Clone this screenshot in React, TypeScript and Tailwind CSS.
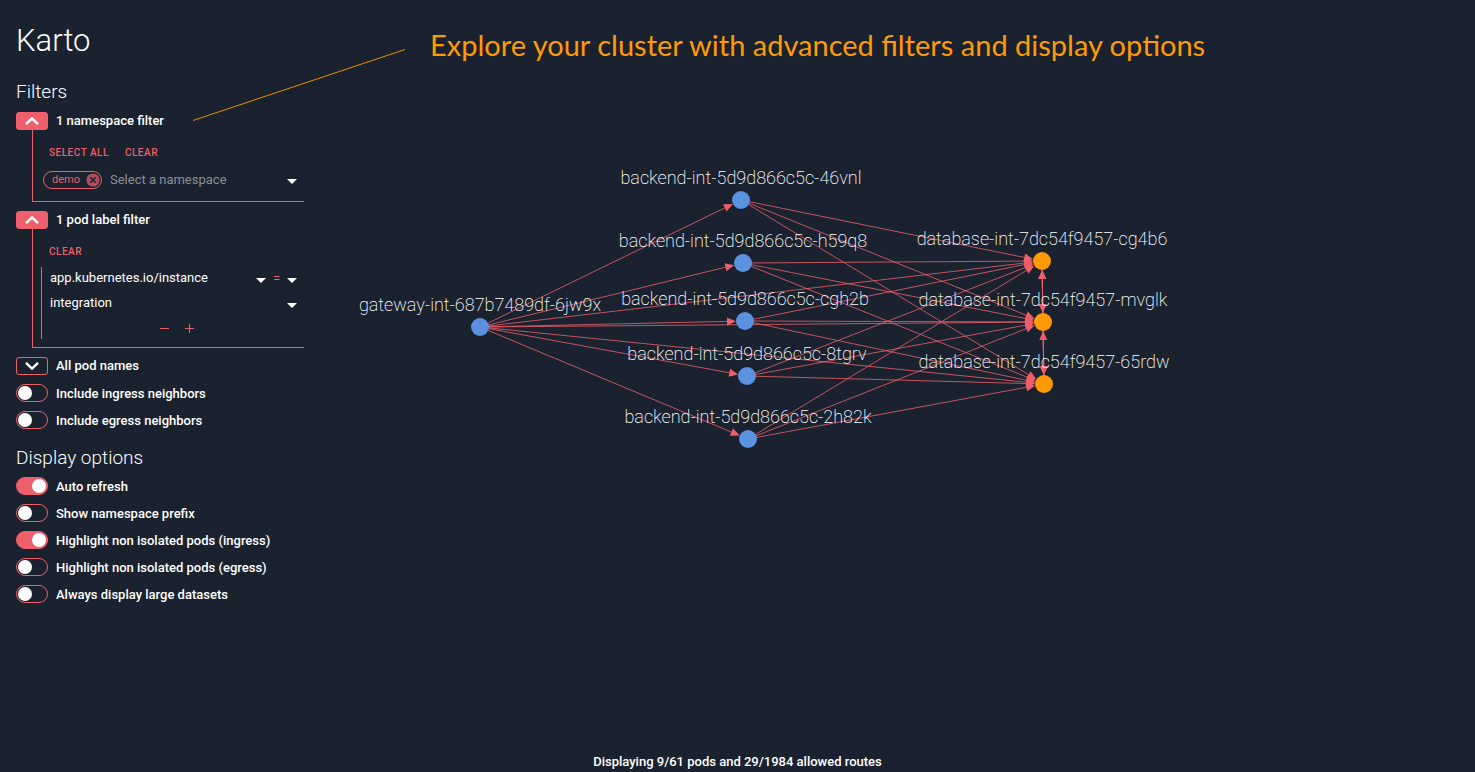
import { useState } from 'react';

type Point = { x: number; y: number };
type Pod = Point & { name: string; isolated: boolean };

const PODS: Pod[] = [
  { name: 'gateway-int-687b7489df-6jw9x', x: 160, y: 327, isolated: true },
  { name: 'backend-int-5d9d866c5c-46vnl', x: 421, y: 200, isolated: true },
  { name: 'backend-int-5d9d866c5c-h59q8', x: 423, y: 263, isolated: true },
  { name: 'backend-int-5d9d866c5c-cgh2b', x: 425, y: 321, isolated: true },
  { name: 'backend-int-5d9d866c5c-8tgrv', x: 427, y: 376, isolated: true },
  { name: 'backend-int-5d9d866c5c-2h82k', x: 428, y: 439, isolated: true },
  { name: 'database-int-7dc54f9457-cg4b6', x: 722, y: 261, isolated: false },
  { name: 'database-int-7dc54f9457-mvglk', x: 723, y: 322, isolated: false },
  { name: 'database-int-7dc54f9457-65rdw', x: 724, y: 384, isolated: false },
];

const GATEWAY = 0;
const BACKENDS = [1, 2, 3, 4, 5];
const DATABASES = [6, 7, 8];

const ROUTES: [number, number][] = [
  ...[...BACKENDS, ...DATABASES].map((t): [number, number] => [GATEWAY, t]),
  ...BACKENDS.flatMap((s) => DATABASES.map((t): [number, number] => [s, t])),
  ...DATABASES.flatMap((s) => DATABASES.filter((t) => t !== s).map((t): [number, number] => [s, t])),
];

const RADIUS = 9;
const ARROW = 9;

function Route({ from, to }: { from: Point; to: Point }) {
  const length = Math.hypot(to.x - from.x, to.y - from.y);
  const ux = (to.x - from.x) / length;
  const uy = (to.y - from.y) / length;
  const tip = { x: to.x - ux * RADIUS, y: to.y - uy * RADIUS };
  const base = { x: tip.x - ux * ARROW, y: tip.y - uy * ARROW };
  const half = 4;
  return (
    <g>
      <line x1={from.x} y1={from.y} x2={base.x} y2={base.y} className="stroke-[#ee5f6b]/80" />
      <polygon
        className="fill-[#ee5f6b]"
        points={`${tip.x},${tip.y} ${base.x - uy * half},${base.y + ux * half} ${base.x + uy * half},${base.y - ux * half}`}
      />
    </g>
  );
}

function ClusterGraph() {
  return (
    <svg className="h-full w-full" role="img" aria-label="Allowed routes between pods">
      {ROUTES.map(([s, t]) => (
        <Route key={`${s}-${t}`} from={PODS[s]} to={PODS[t]} />
      ))}
      {PODS.map((pod) => (
        <circle
          key={pod.name}
          cx={pod.x}
          cy={pod.y}
          r={RADIUS}
          className={pod.isolated ? 'fill-[#5b92df]' : 'fill-[#ff9a05]'}
        />
      ))}
      {PODS.map((pod) => (
        <text
          key={pod.name}
          x={pod.x}
          y={pod.y - 16}
          textAnchor="middle"
          className="fill-white text-[18px] font-extralight"
        >
          {pod.name}
        </text>
      ))}
    </svg>
  );
}

function Caret() {
  return (
    <svg viewBox="0 0 10 7" className="pointer-events-none h-[7px] w-[10px] shrink-0 fill-white" aria-hidden="true">
      <path d="M0 2h10L5 7z" />
    </svg>
  );
}

function FilterHeader({ label, open, onToggle }: { label: string; open: boolean; onToggle: () => void }) {
  return (
    <div className="flex h-[18px] items-center gap-2">
      <button
        type="button"
        aria-label={label}
        aria-expanded={open}
        onClick={onToggle}
        className={`flex h-[18px] w-8 items-center justify-center rounded-[3px] border border-[#ee5f6b] ${open ? 'bg-[#ee5f6b]' : ''}`}
      >
        <svg viewBox="0 0 14 8" className="h-2 w-[14px] fill-none stroke-white stroke-[2.4]" aria-hidden="true">
          <path d={open ? 'M1 7.2 7 1.4l6 5.8' : 'M1 .8l6 5.8L13 .8'} />
        </svg>
      </button>
      <span className="text-[13px] font-medium">{label}</span>
    </div>
  );
}

function Toggle({ label, initial = false }: { label: string; initial?: boolean }) {
  const [checked, setChecked] = useState(initial);
  return (
    <label className="flex h-[18px] items-center gap-2 text-[13px] font-medium">
      <input
        type="checkbox"
        checked={checked}
        onChange={() => setChecked(!checked)}
        className="flex h-[18px] w-8 shrink-0 appearance-none items-center rounded-full border border-[#ee5f6b] px-px before:size-[14px] before:rounded-full before:bg-white checked:justify-end checked:bg-[#ee5f6b]"
      />
      <span className="pt-0.5">{label}</span>
    </label>
  );
}

function Action({ children }: { children: string }) {
  return (
    <button type="button" className="text-[10px] leading-3 font-medium tracking-wider text-[#ee5f6b] uppercase">
      {children}
    </button>
  );
}

function NamespacePanel() {
  return (
    <div className="ml-4 flex h-[72px] flex-col border-b border-l border-[#ee5f6b] pt-[17px]">
      <div className="flex gap-4 pl-4">
        <Action>Select all</Action>
        <Action>Clear</Action>
      </div>
      <div className="mt-3 flex items-center pr-[7px] pl-[10px]">
        <span className="flex h-[18px] shrink-0 items-center gap-[6px] rounded-full border border-[#ee5f6b] pr-px pl-2 text-[11px] text-[#ee5f6b]">
          demo
          <button type="button" aria-label="Remove demo">
            <svg viewBox="0 0 14 14" className="size-[14px]" aria-hidden="true">
              <circle cx="7" cy="7" r="6.6" className="fill-[#ae4d5a]" />
              <path d="M4.3 4.3l5.4 5.4M9.7 4.3L4.3 9.7" className="stroke-[#1a2230] stroke-[1.4]" />
            </svg>
          </button>
        </span>
        <input
          aria-label="Namespace"
          placeholder="Select a namespace"
          className="ml-2 h-[18px] min-w-0 flex-1 bg-transparent text-[13px] outline-none placeholder:text-[#8a8f96]"
        />
        <Caret />
      </div>
    </div>
  );
}

function PodLabelPanel() {
  return (
    <div className="ml-4 flex h-[119px] flex-col border-b border-l border-[#ee5f6b] pt-[17px]">
      <div className="flex pl-4">
        <Action>Clear</Action>
      </div>
      <div className="mt-[9px] ml-2 flex h-[72px] flex-col border-l border-[#ee5f6b] pr-[7px] pl-2 text-[13px]">
        <div className="flex h-6 items-center">
          <select aria-label="Label key" className="h-6 min-w-0 flex-1 appearance-none bg-transparent pb-0.5 outline-none">
            <option>app.kubernetes.io/instance</option>
          </select>
          <Caret />
          <select
            aria-label="Operator"
            className="ml-[7px] h-6 w-[14px] appearance-none bg-transparent text-[#ee5f6b] outline-none"
          >
            <option>=</option>
          </select>
          <Caret />
        </div>
        <div className="mt-px flex h-6 items-center">
          <select aria-label="Label value" className="h-6 min-w-0 flex-1 appearance-none bg-transparent pb-0.5 outline-none">
            <option>integration</option>
          </select>
          <Caret />
        </div>
        <div className="flex h-6 items-center justify-center gap-[15px] pl-2">
          <button type="button" aria-label="Remove condition">
            <svg viewBox="0 0 10 10" className="size-[10px] stroke-[#ee5f6b]" aria-hidden="true">
              <path d="M0 5.5h9" />
            </svg>
          </button>
          <button type="button" aria-label="Add condition">
            <svg viewBox="0 0 10 10" className="size-[10px] stroke-[#ee5f6b]" aria-hidden="true">
              <path d="M0 5.5h9M4.5 1v9" />
            </svg>
          </button>
        </div>
      </div>
    </div>
  );
}

export default function App() {
  const [open, setOpen] = useState({ namespace: true, label: true, name: false });
  return (
    <div className="relative flex min-h-screen flex-col bg-[#1a2230] font-['Roboto',sans-serif] text-white">
      <div className="flex flex-1">
        <aside className="w-80 shrink-0 px-4 pt-[21px]">
          <h1 className="text-[31px] leading-10 font-light">Karto</h1>
          <h2 className="mt-[19px] text-[19px] leading-6 font-light">Filters</h2>
          <div className="mt-2 flex flex-col gap-[9px]">
            <section>
              <FilterHeader
                label="1 namespace filter"
                open={open.namespace}
                onToggle={() => setOpen({ ...open, namespace: !open.namespace })}
              />
              {open.namespace && <NamespacePanel />}
            </section>
            <section>
              <FilterHeader
                label="1 pod label filter"
                open={open.label}
                onToggle={() => setOpen({ ...open, label: !open.label })}
              />
              {open.label && <PodLabelPanel />}
            </section>
            <FilterHeader
              label="All pod names"
              open={open.name}
              onToggle={() => setOpen({ ...open, name: !open.name })}
            />
          </div>
          <div className="mt-[9px] flex flex-col gap-[9px]">
            <Toggle label="Include ingress neighbors" />
            <Toggle label="Include egress neighbors" />
          </div>
          <h2 className="mt-[17px] text-[19px] leading-6 font-light">Display options</h2>
          <div className="mt-[7px] flex flex-col gap-[9px]">
            <Toggle label="Auto refresh" initial />
            <Toggle label="Show namespace prefix" />
            <Toggle label="Highlight non isolated pods (ingress)" initial />
            <Toggle label="Highlight non isolated pods (egress)" />
            <Toggle label="Always display large datasets" />
          </div>
        </aside>
        <main className="min-w-0 flex-1">
          <ClusterGraph />
        </main>
      </div>
      <footer className="pb-1 text-center text-[13px] leading-3 font-medium">
        Displaying 9/61 pods and 29/1984 allowed routes
      </footer>
      <svg className="pointer-events-none absolute top-0 left-0 h-32 w-[420px]" aria-hidden="true">
        <line x1="193" y1="120.5" x2="405" y2="49.5" className="stroke-[#ff9a05] opacity-90" />
      </svg>
      <p className="pointer-events-none absolute top-[25px] left-[430px] font-['Lato',sans-serif] text-[29px] leading-10 whitespace-nowrap text-[#ff9a05]">
        Explore your cluster with advanced filters and display options
      </p>
    </div>
  );
}
